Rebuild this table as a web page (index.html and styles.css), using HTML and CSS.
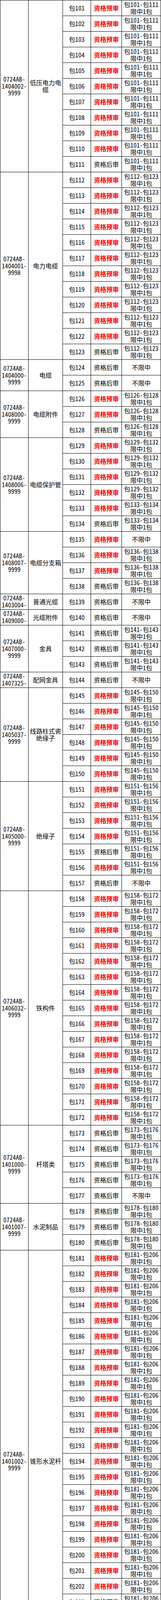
FILE: index.html
```html
<!DOCTYPE html>
<html lang="zh-CN">
<head>
<meta charset="utf-8">
<title>分包表</title>
<link rel="stylesheet" href="styles.css">
</head>
<body>
<div class="grid">
<div class="cell s11">0724AB-<wbr>1404002-<wbr>9999</div><div class="cell s11">低压电力电缆</div><div class="cell">包101</div><div class="cell p">资格预审</div><div class="cell">包101-包111限中1包</div>
<div class="cell">包102</div><div class="cell p">资格预审</div><div class="cell">包101-包111限中1包</div>
<div class="cell">包103</div><div class="cell p">资格预审</div><div class="cell">包101-包111限中1包</div>
<div class="cell">包104</div><div class="cell p">资格预审</div><div class="cell">包101-包111限中1包</div>
<div class="cell">包105</div><div class="cell p">资格预审</div><div class="cell">包101-包111限中1包</div>
<div class="cell">包106</div><div class="cell p">资格预审</div><div class="cell">包101-包111限中1包</div>
<div class="cell">包107</div><div class="cell p">资格预审</div><div class="cell">包101-包111限中1包</div>
<div class="cell">包108</div><div class="cell p">资格预审</div><div class="cell">包101-包111限中1包</div>
<div class="cell">包109</div><div class="cell p">资格预审</div><div class="cell">包101-包111限中1包</div>
<div class="cell">包110</div><div class="cell p">资格预审</div><div class="cell">包101-包111限中1包</div>
<div class="cell">包111</div><div class="cell">资格后审</div><div class="cell">包101-包111限中1包</div>
<div class="cell s12">0724AB-<wbr>1404001-<wbr>9998</div><div class="cell s12">电力电缆</div><div class="cell">包112</div><div class="cell p">资格预审</div><div class="cell">包112-包123限中1包</div>
<div class="cell">包113</div><div class="cell p">资格预审</div><div class="cell">包112-包123限中1包</div>
<div class="cell">包114</div><div class="cell p">资格预审</div><div class="cell">包112-包123限中1包</div>
<div class="cell">包115</div><div class="cell p">资格预审</div><div class="cell">包112-包123限中1包</div>
<div class="cell">包116</div><div class="cell p">资格预审</div><div class="cell">包112-包123限中1包</div>
<div class="cell">包117</div><div class="cell p">资格预审</div><div class="cell">包112-包123限中1包</div>
<div class="cell">包118</div><div class="cell p">资格预审</div><div class="cell">包112-包123限中1包</div>
<div class="cell">包119</div><div class="cell p">资格预审</div><div class="cell">包112-包123限中1包</div>
<div class="cell">包120</div><div class="cell p">资格预审</div><div class="cell">包112-包123限中1包</div>
<div class="cell">包121</div><div class="cell p">资格预审</div><div class="cell">包112-包123限中1包</div>
<div class="cell">包122</div><div class="cell p">资格预审</div><div class="cell">包112-包123限中1包</div>
<div class="cell">包123</div><div class="cell">资格后审</div><div class="cell">包112-包123限中1包</div>
<div class="cell s2">0724AB-<wbr>1404000-<wbr>9999</div><div class="cell s2">电缆</div><div class="cell">包124</div><div class="cell">资格后审</div><div class="cell">不限中</div>
<div class="cell">包125</div><div class="cell">资格后审</div><div class="cell">不限中</div>
<div class="cell s3">0724AB-<wbr>1408000-<wbr>9999</div><div class="cell s3">电缆附件</div><div class="cell">包126</div><div class="cell p">资格预审</div><div class="cell">包126-包128限中1包</div>
<div class="cell">包127</div><div class="cell p">资格预审</div><div class="cell">包126-包128限中1包</div>
<div class="cell">包128</div><div class="cell">资格后审</div><div class="cell">包126-包128限中1包</div>
<div class="cell s6">0724AB-<wbr>1408006-<wbr>9999</div><div class="cell s6">电缆保护管</div><div class="cell">包129</div><div class="cell p">资格预审</div><div class="cell">包129-包132限中1包</div>
<div class="cell">包130</div><div class="cell p">资格预审</div><div class="cell">包129-包132限中1包</div>
<div class="cell">包131</div><div class="cell p">资格预审</div><div class="cell">包129-包132限中1包</div>
<div class="cell">包132</div><div class="cell p">资格预审</div><div class="cell">包129-包132限中1包</div>
<div class="cell">包133</div><div class="cell p">资格预审</div><div class="cell">包133-包134限中1包</div>
<div class="cell">包134</div><div class="cell">资格后审</div><div class="cell">包133-包134限中1包</div>
<div class="cell s4">0724AB-<wbr>1408007-<wbr>9999</div><div class="cell s4">电缆分支箱</div><div class="cell">包135</div><div class="cell p">资格预审</div><div class="cell">不限中</div>
<div class="cell">包136</div><div class="cell p">资格预审</div><div class="cell">包136-包138限中1包</div>
<div class="cell">包137</div><div class="cell p">资格预审</div><div class="cell">包136-包138限中1包</div>
<div class="cell">包138</div><div class="cell">资格后审</div><div class="cell">包136-包138限中1包</div>
<div class="cell clip">0724AB-<wbr>1403004-<wbr>9999</div><div class="cell">普通光缆</div><div class="cell">包139</div><div class="cell">资格后审</div><div class="cell">不限中</div>
<div class="cell clip">0724AB-<wbr>1409000-<wbr>9999</div><div class="cell">光缆附件</div><div class="cell">包140</div><div class="cell">资格后审</div><div class="cell">不限中</div>
<div class="cell s3">0724AB-<wbr>1407000-<wbr>9999</div><div class="cell s3">金具</div><div class="cell">包141</div><div class="cell">资格后审</div><div class="cell">包141-包143限中1包</div>
<div class="cell">包142</div><div class="cell">资格后审</div><div class="cell">包141-包143限中1包</div>
<div class="cell">包143</div><div class="cell">资格后审</div><div class="cell">包141-包143限中1包</div>
<div class="cell clip">0724AB-<wbr>1407325-<wbr>9999</div><div class="cell">配网金具</div><div class="cell">包144</div><div class="cell">资格后审</div><div class="cell">不限中</div>
<div class="cell s6">0724AB-<wbr>1405037-<wbr>9999</div><div class="cell s6">线路柱式瓷绝缘子</div><div class="cell">包145</div><div class="cell p">资格预审</div><div class="cell">包145-包150限中1包</div>
<div class="cell">包146</div><div class="cell p">资格预审</div><div class="cell">包145-包150限中1包</div>
<div class="cell">包147</div><div class="cell p">资格预审</div><div class="cell">包145-包150限中1包</div>
<div class="cell">包148</div><div class="cell p">资格预审</div><div class="cell">包145-包150限中1包</div>
<div class="cell">包149</div><div class="cell p">资格预审</div><div class="cell">包145-包150限中1包</div>
<div class="cell">包150</div><div class="cell p">资格预审</div><div class="cell">包145-包150限中1包</div>
<div class="cell s7">0724AB-<wbr>1405000-<wbr>9999</div><div class="cell s7">绝缘子</div><div class="cell">包151</div><div class="cell p">资格预审</div><div class="cell">包151-包156限中1包</div>
<div class="cell">包152</div><div class="cell p">资格预审</div><div class="cell">包151-包156限中1包</div>
<div class="cell">包153</div><div class="cell p">资格预审</div><div class="cell">包151-包156限中1包</div>
<div class="cell">包154</div><div class="cell p">资格预审</div><div class="cell">包151-包156限中1包</div>
<div class="cell">包155</div><div class="cell">资格后审</div><div class="cell">包151-包156限中1包</div>
<div class="cell">包156</div><div class="cell p">资格预审</div><div class="cell">包151-包156限中1包</div>
<div class="cell">包157</div><div class="cell">资格后审</div><div class="cell">不限中</div>
<div class="cell s15">0724AB-<wbr>1406032-<wbr>9999</div><div class="cell s15">铁构件</div><div class="cell">包158</div><div class="cell p">资格预审</div><div class="cell">包158-包172限中1包</div>
<div class="cell">包159</div><div class="cell p">资格预审</div><div class="cell">包158-包172限中1包</div>
<div class="cell">包160</div><div class="cell p">资格预审</div><div class="cell">包158-包172限中1包</div>
<div class="cell">包161</div><div class="cell p">资格预审</div><div class="cell">包158-包172限中1包</div>
<div class="cell">包162</div><div class="cell p">资格预审</div><div class="cell">包158-包172限中1包</div>
<div class="cell">包163</div><div class="cell p">资格预审</div><div class="cell">包158-包172限中1包</div>
<div class="cell">包164</div><div class="cell p">资格预审</div><div class="cell">包158-包172限中1包</div>
<div class="cell">包165</div><div class="cell p">资格预审</div><div class="cell">包158-包172限中1包</div>
<div class="cell">包166</div><div class="cell p">资格预审</div><div class="cell">包158-包172限中1包</div>
<div class="cell">包167</div><div class="cell p">资格预审</div><div class="cell">包158-包172限中1包</div>
<div class="cell">包168</div><div class="cell p">资格预审</div><div class="cell">包158-包172限中1包</div>
<div class="cell">包169</div><div class="cell p">资格预审</div><div class="cell">包158-包172限中1包</div>
<div class="cell">包170</div><div class="cell p">资格预审</div><div class="cell">包158-包172限中1包</div>
<div class="cell">包171</div><div class="cell p">资格预审</div><div class="cell">包158-包172限中1包</div>
<div class="cell">包172</div><div class="cell p">资格预审</div><div class="cell">包158-包172限中1包</div>
<div class="cell s5">0724AB-<wbr>1401000-<wbr>9999</div><div class="cell s5">杆塔类</div><div class="cell">包173</div><div class="cell">资格后审</div><div class="cell">包173-包176限中1包</div>
<div class="cell">包174</div><div class="cell">资格后审</div><div class="cell">包173-包176限中1包</div>
<div class="cell">包175</div><div class="cell">资格后审</div><div class="cell">包173-包176限中1包</div>
<div class="cell">包176</div><div class="cell">资格后审</div><div class="cell">包173-包176限中1包</div>
<div class="cell">包177</div><div class="cell">资格后审</div><div class="cell">不限中</div>
<div class="cell s3">0724AB-<wbr>1401007-<wbr>9999</div><div class="cell s3">水泥制品</div><div class="cell">包178</div><div class="cell">资格后审</div><div class="cell">包178-包180限中1包</div>
<div class="cell">包179</div><div class="cell">资格后审</div><div class="cell">包178-包180限中1包</div>
<div class="cell">包180</div><div class="cell">资格后审</div><div class="cell">包178-包180限中1包</div>
<div class="cell s27">0724AB-<wbr>1401002-<wbr>9999</div><div class="cell s27">锥形水泥杆</div><div class="cell">包181</div><div class="cell p">资格预审</div><div class="cell">包181-包206限中1包</div>
<div class="cell">包182</div><div class="cell p">资格预审</div><div class="cell">包181-包206限中1包</div>
<div class="cell">包183</div><div class="cell p">资格预审</div><div class="cell">包181-包206限中1包</div>
<div class="cell">包184</div><div class="cell p">资格预审</div><div class="cell">包181-包206限中1包</div>
<div class="cell">包185</div><div class="cell p">资格预审</div><div class="cell">包181-包206限中1包</div>
<div class="cell">包186</div><div class="cell p">资格预审</div><div class="cell">包181-包206限中1包</div>
<div class="cell">包187</div><div class="cell p">资格预审</div><div class="cell">包181-包206限中1包</div>
<div class="cell">包188</div><div class="cell p">资格预审</div><div class="cell">包181-包206限中1包</div>
<div class="cell">包189</div><div class="cell p">资格预审</div><div class="cell">包181-包206限中1包</div>
<div class="cell">包190</div><div class="cell p">资格预审</div><div class="cell">包181-包206限中1包</div>
<div class="cell">包191</div><div class="cell p">资格预审</div><div class="cell">包181-包206限中1包</div>
<div class="cell">包192</div><div class="cell p">资格预审</div><div class="cell">包181-包206限中1包</div>
<div class="cell">包193</div><div class="cell p">资格预审</div><div class="cell">包181-包206限中1包</div>
<div class="cell">包194</div><div class="cell p">资格预审</div><div class="cell">包181-包206限中1包</div>
<div class="cell">包195</div><div class="cell p">资格预审</div><div class="cell">包181-包206限中1包</div>
<div class="cell">包196</div><div class="cell p">资格预审</div><div class="cell">包181-包206限中1包</div>
<div class="cell">包197</div><div class="cell p">资格预审</div><div class="cell">包181-包206限中1包</div>
<div class="cell">包198</div><div class="cell p">资格预审</div><div class="cell">包181-包206限中1包</div>
<div class="cell">包199</div><div class="cell p">资格预审</div><div class="cell">包181-包206限中1包</div>
<div class="cell">包200</div><div class="cell p">资格预审</div><div class="cell">包181-包206限中1包</div>
<div class="cell">包201</div><div class="cell p">资格预审</div><div class="cell">包181-包206限中1包</div>
<div class="cell">包202</div><div class="cell p">资格预审</div><div class="cell">包181-包206限中1包</div>
<div class="cell">包203</div><div class="cell p">资格预审</div><div class="cell">包181-包206限中1包</div>
<div class="cell">包204</div><div class="cell p">资格预审</div><div class="cell">包181-包206限中1包</div>
<div class="cell">包205</div><div class="cell p">资格预审</div><div class="cell">包181-包206限中1包</div>
<div class="cell">包206</div><div class="cell p">资格预审</div><div class="cell">包181-包206限中1包</div>
<div class="cell">包207</div><div class="cell p">资格预审</div><div class="cell">不限中</div>
</div>
</body>
</html>
```

FILE: styles.css
```css
html, body {
  margin: 0;
  padding: 0;
  background: #fff;
}

.grid {
  display: grid;
  grid-template-columns: 72px 88px 72px 79px 100px;
  grid-auto-rows: 40px;
  width: 412px;
  box-sizing: border-box;
  border-top: 1px solid #000;
  border-left: 1px solid #000;
  font-family: "Noto Sans CJK SC", "Noto Sans", sans-serif;
  font-size: 16px;
  line-height: 17.7px;
  color: #000;
  font-feature-settings: "hwid" 1;
}

.cell {
  display: flex;
  align-items: center;
  justify-content: center;
  text-align: center;
  padding: 0 2px;
  border-right: 1px solid #000;
  border-bottom: 1px solid #000;
  min-width: 0;
}

.p {
  color: #f00;
  font-weight: 700;
}

.clip {
  align-items: flex-start;
  padding-top: 1px;
  overflow: hidden;
}

.s2 { grid-row: span 2; }
.s3 { grid-row: span 3; }
.s4 { grid-row: span 4; }
.s5 { grid-row: span 5; }
.s6 { grid-row: span 6; }
.s7 { grid-row: span 7; }
.s11 { grid-row: span 11; }
.s12 { grid-row: span 12; }
.s15 { grid-row: span 15; }
.s27 { grid-row: span 27; }
```
